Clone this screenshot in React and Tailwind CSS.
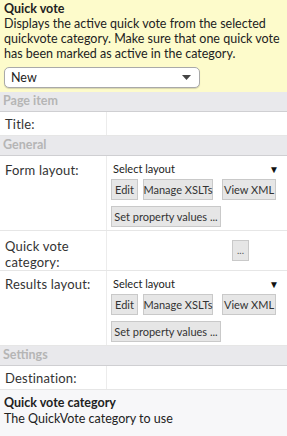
import React from 'react';

const FONT = { fontFamily: 'Lato, "Open Sans", sans-serif' };

const Btn = ({ children, className = '' }) => (
    <button className={`h-[21px] shrink-0 whitespace-nowrap border border-[#c9c9c9] bg-[#e6e6e6] text-[11px] text-[#333] leading-none flex items-center justify-center ${className}`}>
        {children}
    </button>
);

const Header = ({ label }) => (
    <div className="h-[20px] shrink-0 flex items-center pl-[3px] bg-[#e9e9ec] border-b border-[#cfcfd2] text-[12.5px] font-bold text-[#b5b5b5]">
        {label}
    </div>
);

const Row = ({ label, children, className = '', top = 'pt-[4px]' }) => (
    <div className={`flex shrink-0 border-b border-[#e6e6e6] bg-white ${className}`}>
        <div className={`w-[107px] shrink-0 border-r border-[#ececec] pl-[5px] text-[13px] tracking-[0.2px] text-[#333] leading-[16px] ${top}`}>
            {label}
        </div>
        <div className="flex-1 min-w-0">{children}</div>
    </div>
);

const LayoutPicker = () => (
    <div className="pl-[4px] pr-[8px] pt-[6px]">
        <div className="flex items-center justify-between h-[14px] pl-[2px] text-[11px] text-[#222]">
            <span>Select layout</span>
            <span className="text-[10px] text-[#111]">▼</span>
        </div>
        <div className="flex mt-[3px]">
            <Btn className="w-[27px]">Edit</Btn>
            <Btn className="w-[70px] ml-[5px]">Manage XSLTs</Btn>
            <Btn className="w-[54px] ml-[9px]">View XML</Btn>
        </div>
        <div className="mt-[6px]">
            <Btn className="w-[110px]">Set property values ...</Btn>
        </div>
    </div>
);

export default function App() {
    return (
        <div className="w-[287px] h-[436px] overflow-hidden bg-[#f7f7f9] flex flex-col" style={FONT}>
            {/* Description */}
            <div className="bg-[#fdfbcb] px-[4px] pt-[1px] h-[92px] shrink-0 text-[12.5px] leading-[15px] text-[#222]">
                <div className="font-bold">Quick vote</div>
                <div>Displays the active quick vote from the selected quickvote category. Make sure that one quick vote has been marked as active in the category.</div>
                <div className="mt-[6px] w-[196px] h-[21px] bg-white border border-[#a9a9a9] rounded-[5px] shadow-[0_1px_1px_rgba(0,0,0,0.15)] flex items-center justify-between pl-[6px] pr-[8px]">
                    <span>New</span>
                    <svg width="9" height="5" viewBox="0 0 9 5"><path d="M0 0h9L4.5 5z" fill="#444" /></svg>
                </div>
            </div>

            <Header label="Page item" />
            <Row label="Title:" className="h-[24px]" />

            <Header label="General" />
            <Row label="Form layout:" className="h-[75px]" top="pt-[6px]"><LayoutPicker /></Row>
            <Row label={<>Quick vote<br />category:</>} className="h-[40px]" top="pt-[7px]">
                <div className="pl-[125px] pt-[5px]">
                    <button className="w-[17px] h-[21px] border border-[#c9c9c9] bg-[#e6e6e6] text-[10px] text-[#555] leading-none">...</button>
                </div>
            </Row>
            <Row label="Results layout:" className="h-[75px]" top="pt-[5px]"><LayoutPicker /></Row>

            <Header label="Settings" />
            <Row label="Destination:" className="h-[24px]" />

            <div className="px-[4px] pt-[5px] text-[12.5px] leading-[16px] text-[#222]">
                <div className="font-bold">Quick vote category</div>
                <div>The QuickVote category to use</div>
            </div>
        </div>
    );
}
